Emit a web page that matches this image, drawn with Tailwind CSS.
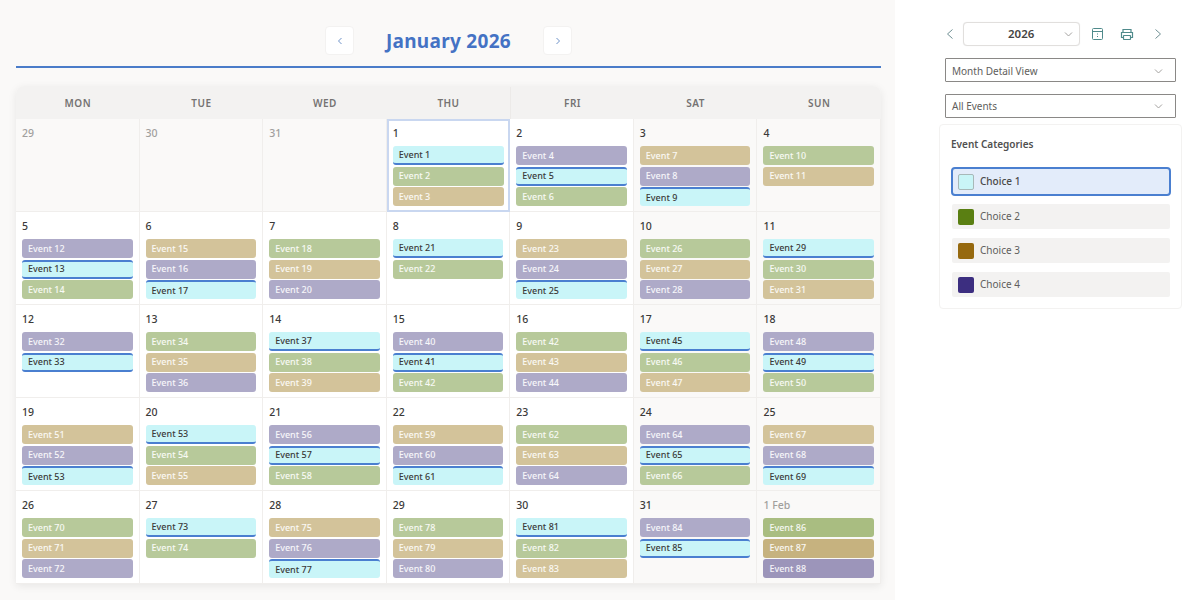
<!DOCTYPE html>
<html>
<head>
    <title>Event Calendar</title>
    <script src="https://cdn.jsdelivr.net/npm/@tailwindcss/browser@4"></script>
</head>
<body class="bg-white font-['Noto_Sans',sans-serif] overflow-hidden">
    <div class="flex h-[604px] w-[1190px]">
        <div class="w-[895px] h-[600px] bg-[#faf9f8] pl-4 pr-[14px] shrink-0">
            <div class="flex items-center justify-center h-[68px] pt-[27px] pb-[12px] border-b-2 border-[#4a7cc9] box-border">
                <button class="w-[29px] h-[29px] bg-white border border-[#f3f2f1] rounded-sm flex items-center justify-center">
                    <svg width="8" height="10" viewBox="0 0 8 10" fill="none" stroke="#6f93c9" stroke-width="1"><path d="M5.5 2 2.5 5l3 3"/></svg>
                </button>
                <h1 class="w-[189px] text-center text-[19px] leading-7 font-bold tracking-[0.3px] text-[#4472c4]">January 2026</h1>
                <button class="w-[29px] h-[29px] bg-white border border-[#f3f2f1] rounded-sm flex items-center justify-center">
                    <svg width="8" height="10" viewBox="0 0 8 10" fill="none" stroke="#6f93c9" stroke-width="1"><path d="M2.5 2 5.5 5l-3 3"/></svg>
                </button>
            </div>
            <div class="mt-[18px] w-[865px] rounded-t-lg shadow-[0_2px_8px_rgba(0,0,0,0.08)]">
                <div class="grid grid-cols-7 h-[33px] pt-[1px] bg-[#f3f2f1] rounded-t-lg text-[10px] font-semibold tracking-[0.5px] text-[#757372]">
                    <div class="flex items-center justify-center">MON</div>
                    <div class="flex items-center justify-center">TUE</div>
                    <div class="flex items-center justify-center">WED</div>
                    <div class="flex items-center justify-center">THU</div>
                    <div class="flex items-center justify-center border-l border-[#eceae8]">FRI</div>
                    <div class="flex items-center justify-center">SAT</div>
                    <div class="flex items-center justify-center">SUN</div>
                </div>
                <div id="days" class="grid grid-cols-7 grid-rows-[repeat(5,93px)]"></div>
            </div>
        </div>
        <div class="flex-1 relative">
            <div class="flex items-center h-[24px] mt-[22px] ml-[50px]">
                <svg width="10" height="12" viewBox="0 0 10 12" fill="none" stroke="#6f8f93" stroke-width="1"><path d="M7.5 1.5 2.5 6l5 4.5"/></svg>
                <div class="ml-[8px] w-[117px] h-[24px] bg-white border border-[#e1dfdd] rounded-sm shadow-[0_0_1px_rgba(0,0,0,0.1)] flex items-center pl-[44px] text-[11.5px] font-semibold text-[#444342]">
                    <span>2026</span>
                    <svg class="ml-[30px]" width="9" height="5" viewBox="0 0 9 5" fill="none" stroke="#a3a19f" stroke-width="1"><path d="M1 .5l3.5 3.5 3.5-3.5"/></svg>
                </div>
                <svg class="ml-[12px]" width="11" height="12" viewBox="0 0 11 12" fill="none" stroke="#4f8a8b" stroke-width="1"><rect x="0.5" y="0.5" width="10" height="11" rx="1"/><path d="M0.5 3.5h10M5.5 5.5v1M5.5 8v1"/></svg>
                <svg class="ml-[17px]" width="14" height="13" viewBox="0 0 14 13" fill="none" stroke="#4f8a8b" stroke-width="1.2"><path d="M3 4V1.5h8V4M3 9.5H1.5V4.5h11v5H11"/><rect x="3.5" y="7.5" width="7" height="4" rx="0.5"/></svg>
                <svg class="ml-[19px]" width="10" height="12" viewBox="0 0 10 12" fill="none" stroke="#6f8f93" stroke-width="1"><path d="M2.5 1.5 7.5 6l-5 4.5"/></svg>
            </div>
            <div class="ml-[50px] mt-[12px] w-[231px] h-[24px] border border-[#8a8886] rounded-[1px] flex items-center justify-between pl-[6px] pr-[12px] pt-[2px] text-[10px] text-[#605e5c]">
                <span>Month Detail View</span>
                <svg width="9" height="5" viewBox="0 0 9 5" fill="none" stroke="#a3a19f" stroke-width="1"><path d="M1 .5l3.5 3.5 3.5-3.5"/></svg>
            </div>
            <div class="ml-[50px] mt-[12px] w-[231px] h-[24px] border border-[#8a8886] rounded-[1px] flex items-center justify-between pl-[6px] pr-[12px] pt-[1px] text-[10px] text-[#605e5c]">
                <span>All Events</span>
                <svg width="9" height="5" viewBox="0 0 9 5" fill="none" stroke="#a3a19f" stroke-width="1"><path d="M1 .5l3.5 3.5 3.5-3.5"/></svg>
            </div>
            <div class="ml-[44px] mt-[6px] w-[243px] h-[185px] bg-white border border-[#f3f2f1] rounded-sm px-[12px] pt-[11px]">
                <h2 class="-ml-[1px] text-[10px] leading-[16px] font-semibold text-[#505050]">Event Categories</h2>
                <div class="mt-[15px] -mx-[1px] w-[220px] h-[29px] bg-[#e3ecfa] border-2 border-[#4a7fd0] rounded-[4px] flex items-center pl-[5px] text-[10px] font-medium text-[#4a4948]">
                    <span class="w-4 h-4 bg-[#c9f5f7] border border-[#a8b8b8] rounded-[2px] mr-[6px]"></span>Choice 1
                </div>
                <div class="mt-[8px] w-[218px] h-[25px] bg-[#f3f2f1] rounded-[2px] flex items-center pl-[6px] text-[10px] text-[#605e5c]">
                    <span class="w-4 h-4 bg-[#5a7f12] rounded-[2px] mr-[6px]"></span>Choice 2
                </div>
                <div class="mt-[9px] w-[218px] h-[25px] bg-[#f3f2f1] rounded-[2px] flex items-center pl-[6px] text-[10px] text-[#605e5c]">
                    <span class="w-4 h-4 bg-[#96690f] rounded-[2px] mr-[6px]"></span>Choice 3
                </div>
                <div class="mt-[9px] w-[218px] h-[25px] bg-[#f3f2f1] rounded-[2px] flex items-center pl-[6px] text-[10px] text-[#605e5c]">
                    <span class="w-4 h-4 bg-[#3c2e80] rounded-[2px] mr-[6px]"></span>Choice 4
                </div>
            </div>
        </div>
    </div>
    <script>
        // c cyan, g green, t tan, p purple
        const days = [
            ["29", ""], ["30", ""], ["31", ""],
            ["1", "c1 g2 t3"], ["2", "p4 c5 g6"], ["3", "t7 p8 c9"], ["4", "g10 t11"],
            ["5", "p12 c13 g14"], ["6", "t15 p16 c17"], ["7", "g18 t19 p20"], ["8", "c21 g22"], ["9", "t23 p24 c25"], ["10", "g26 t27 p28"], ["11", "c29 g30 t31"],
            ["12", "p32 c33"], ["13", "g34 t35 p36"], ["14", "c37 g38 t39"], ["15", "p40 c41 g42"], ["16", "g42 t43 p44"], ["17", "c45 g46 t47"], ["18", "p48 c49 g50"],
            ["19", "t51 p52 c53"], ["20", "c53 g54 t55"], ["21", "p56 c57 g58"], ["22", "t59 p60 c61"], ["23", "g62 t63 p64"], ["24", "p64 c65 g66"], ["25", "t67 p68 c69"],
            ["26", "g70 t71 p72"], ["27", "c73 g74"], ["28", "t75 p76 c77"], ["29", "g78 t79 p80"], ["30", "c81 g82 t83"], ["31", "p84 c85"], ["1 Feb", "G86 T87 P88"]
        ];
        const eventColors = {
            g: "bg-[#b7c99a] text-white/90",
            t: "bg-[#d3c39a] text-white/90",
            p: "bg-[#aeaac8] text-white/90",
            G: "bg-[#a9bd81] text-white/90",
            T: "bg-[#c6b27f] text-white/90",
            P: "bg-[#9c95ba] text-white/90"
        };
        // the cyan ones show their blue edge differently per slot
        const cyanBySlot = [
            "bg-[#c9f5f8] text-[#3b3a39] border-b-2 border-[#4a7fd0]",
            "bg-[#c9f5f8] text-[#3b3a39] border-y-2 border-[#4a7fd0]",
            "bg-[#c9f5f8] text-[#3b3a39] border-t-2 border-[#4a7fd0]"
        ];

        const container = document.getElementById("days");
        days.forEach((day, index) => {
            const isOther = index < 3 || index === 34;
            const col = index % 7;
            const cell = document.createElement("div");
            let cellClass = "px-[6px] pt-[6px] border-b border-r border-[#f0eeec] ";
            cellClass += (isOther || col >= 5) ? "bg-[#faf9f8]" : "bg-white";
            if (index === 3) {
                cellClass = "px-[4px] pt-[4px] border-2 border-[#c9d7f0] bg-white";
            }
            cell.className = cellClass;

            const label = document.createElement("div");
            label.textContent = day[0];
            label.className = "text-[10.5px] leading-[16px] font-medium mb-[5px] " + (isOther ? "text-[#a19f9d]" : "text-[#3b3a39]");
            cell.appendChild(label);

            const list = document.createElement("div");
            list.className = "flex flex-col gap-[1.5px]";
            if (day[1]) {
                day[1].split(" ").forEach((ev, slot) => {
                    const type = ev[0];
                    const el = document.createElement("div");
                    el.textContent = "Event " + ev.slice(1);
                    const color = type === "c" ? cyanBySlot[slot] : eventColors[type];
                    el.className = "flex items-center h-[19px] rounded-[3px] pl-[6px] text-[9px] font-medium box-border " + color;
                    list.appendChild(el);
                });
            }
            cell.appendChild(list);
            container.appendChild(cell);
        });
    </script>
</body>
</html>
